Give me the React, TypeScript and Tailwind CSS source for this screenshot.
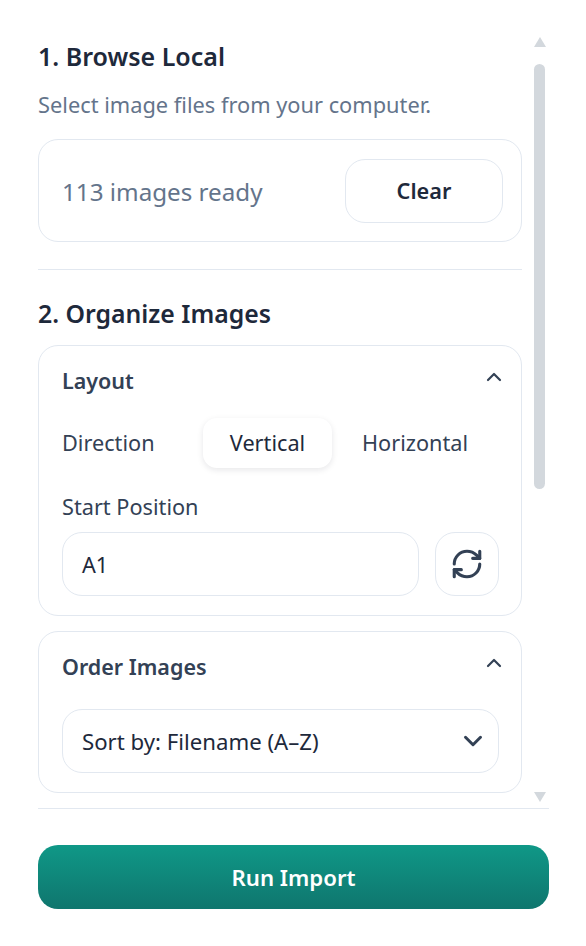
import React from 'react';
import { ChevronUp, ChevronDown, RefreshCw } from 'lucide-react';

const cardClass = 'rounded-[20px] border border-[#e2e8f0] bg-white';

const SectionCard: React.FC<{ title: string; children: React.ReactNode }> = ({ title, children }) => (
  <div className={`${cardClass} px-[23px] pt-[20px] pb-[19px]`}>
    <div className="flex h-[30px] items-center justify-between">
      <h3 className="text-[21.5px] font-semibold text-[#334155]">{title}</h3>
      <ChevronUp className="mr-[-8px] mb-[8px] h-[24px] w-[24px] text-[#334155]" strokeWidth={2.2} />
    </div>
    {children}
  </div>
);

const Scrollbar = () => (
  <div className="ml-[12px] flex w-[11px] shrink-0 flex-col items-center pt-[7px]">
    <div className="h-0 w-0 shrink-0 border-x-[6.5px] border-b-[10px] border-x-transparent border-b-[#d3d8dd]" />
    <div className="mt-[17px] h-[425px] w-[11px] shrink-0 rounded-full bg-[#d3d8dd]" />
    <div className="mt-[303px] h-0 w-0 shrink-0 border-x-[6.5px] border-t-[10px] border-x-transparent border-t-[#d3d8dd]" />
  </div>
);

export default function App() {
  return (
    <div className="flex h-[946px] w-[586px] flex-col bg-white pt-[30px] pr-[37px] pb-[37px] pl-[38px] font-['Noto_Sans',sans-serif] text-[#1e293b]">
      <div className="flex h-[779px] shrink-0 overflow-hidden border-b border-[#e2e8f0]">
        <div className="w-[484px] shrink-0">
          <h2 className="mt-[9px] text-[25px] leading-[34px] font-semibold text-[#1e293b]">1. Browse Local</h2>
          <p className="mt-[18px] text-[21.8px] leading-[28px] text-[#64748b]">Select image files from your computer.</p>

          <div className={`${cardClass} mt-[20px] flex h-[103px] items-center justify-between pr-[18px] pl-[23px]`}>
            <span className="pt-[4px] text-[24.2px] text-[#64748b]">113 images ready</span>
            <button className="h-[64px] w-[158px] rounded-[20px] border border-[#e2e8f0] bg-white pt-[2px] text-[21.7px] font-semibold text-[#1e293b]">
              Clear
            </button>
          </div>

          <div className="mt-[27px] border-t border-[#e2e8f0]" />

          <h2 className="mt-[26px] text-[24.8px] leading-[34px] font-semibold text-[#1e293b]">2. Organize Images</h2>

          <div className="mt-[15px] flex flex-col gap-[15px]">
            <SectionCard title="Layout">
              <div className="mt-[22px] flex items-center">
                <span className="w-[141px] text-[21.7px] text-[#334155]">Direction</span>
                <span className="flex h-[50px] w-[129px] items-center justify-center rounded-[14px] bg-white text-[21.7px] text-[#1e293b] shadow-[0_2px_6px_rgba(15,23,42,0.1)]">
                  Vertical
                </span>
                <span className="ml-[30px] text-[21.7px] text-[#334155]">Horizontal</span>
              </div>
              <div className="mt-[24px] text-[21.7px] leading-[30px] text-[#334155]">Start Position</div>
              <div className="mt-[10px] flex w-[437px] gap-[16px]">
                <div className="flex h-[64px] flex-1 items-center rounded-[20px] border border-[#e2e8f0] px-[19px] pt-[2px] text-[21.7px] text-[#1e293b]">
                  A1
                </div>
                <button className="flex h-[64px] w-[64px] items-center justify-center rounded-[20px] border border-[#e2e8f0]">
                  <RefreshCw className="h-[34px] w-[34px] text-[#334155]" strokeWidth={2.2} />
                </button>
              </div>
            </SectionCard>

            <SectionCard title="Order Images">
              <div className="mt-[27px] flex h-[64px] w-[437px] items-center justify-between rounded-[20px] border border-[#e2e8f0] pr-[10px] pl-[19px] text-[22.2px] text-[#1e293b]">
                <span className="pt-[2px]">Sort by: Filename (A–Z)</span>
                <ChevronDown className="h-[30px] w-[30px] text-[#334155]" strokeWidth={2.4} />
              </div>
            </SectionCard>
          </div>
        </div>
        <Scrollbar />
      </div>

      <button className="mt-[36px] h-[64px] w-full shrink-0 rounded-[20px] bg-gradient-to-b from-[#0f9887] to-[#0f766e] pt-[2px] text-[22.2px] font-semibold text-white">
        Run Import
      </button>
    </div>
  );
}
